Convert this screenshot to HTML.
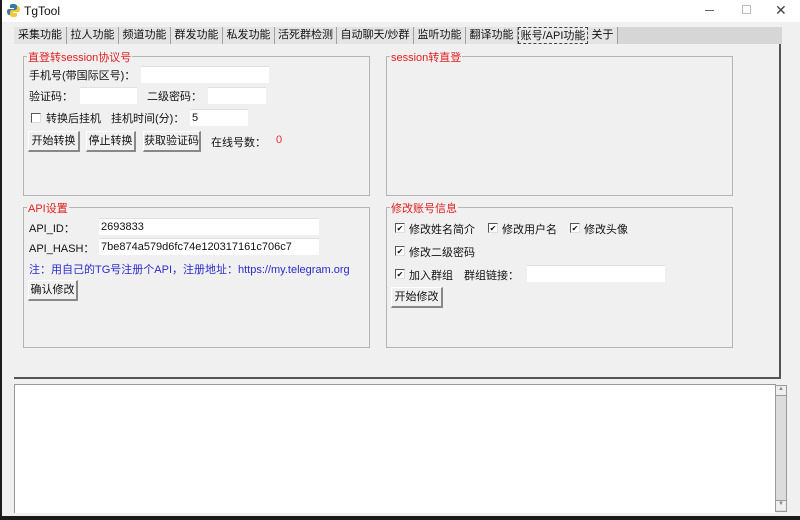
<!DOCTYPE html>
<html><head><meta charset="utf-8"><style>
*{margin:0;padding:0;box-sizing:border-box}
body{width:800px;height:520px;overflow:hidden;background:#1b1b1b;font-family:"Liberation Sans","Noto Sans CJK SC",sans-serif;font-size:11px;color:#111;position:relative}
.win{position:absolute;left:2px;top:0;width:798px;height:516px;background:#f0f0f0}
.title{position:absolute;left:0;top:0;width:798px;height:22px;background:#fff}
.a{position:absolute;white-space:nowrap}
.tabrow{position:absolute;left:12px;top:27px;width:768px;height:17px;background:#d6d6d6}
.tab{position:absolute;top:0;height:17px;line-height:16px;background:#e4e4e4;border-right:1px solid #a0a0a0;text-align:center;font-size:11px;white-space:nowrap;overflow:hidden}
.panel{position:absolute;left:12px;top:44px;width:767px;height:335px;background:#f0f0f0;border-right:2px solid #555;border-bottom:2px solid #555}
.grp{position:absolute;border:1px solid #b4b4b4}
.lg{position:absolute;top:-8px;left:3px;background:#f0f0f0;color:#e02020;padding:0 1px;font-size:11px;white-space:nowrap}
.in{position:absolute;background:#fff;height:17px;border-top:1px solid #e0e0e0;padding-left:2px;line-height:16px;font-size:11px;white-space:nowrap}
.btn{position:absolute;height:21px;background:#f0f0f0;border:1px solid #fff;border-right:2px solid #888;border-bottom:2px solid #888;line-height:18px;text-align:center;font-size:11px;white-space:nowrap;overflow:hidden}
.cb{position:absolute;width:10px;height:10px;border-left:1px solid #555;border-top:1px solid #555;border-right:1px solid #ddd;border-bottom:1px solid #ddd;background:#fff;font-size:8px;line-height:9px;text-align:center}
</style></head><body>
<div class="win">
<div class="title">
<svg class="a" style="left:5px;top:4px" width="13" height="13" viewBox="0 0 13 13"><path d="M6 0C3 0 3 1 3 2v2h4v1H2C0 5 0 7 0 8s1 3 2 3h1V9c0-1 1-2 2-2h3c1 0 2-1 2-2V2C10 1 9 0 6 0z" fill="#3b77a8"/><path d="M7 13c3 0 3-1 3-2V9H6V8h5c2 0 2-2 2-3s-1-3-2-3h-1v2c0 1-1 2-2 2H5C4 6 3 7 3 8v3c0 1 1 2 4 2z" fill="#f2c83a"/></svg>
<div class="a" style="left:22px;top:4px;font-size:12px">TgTool</div>
<div class="a" style="left:703px;top:10px;width:9px;height:1px;background:#666"></div>
<div class="a" style="left:740px;top:5px;width:9px;height:9px;border:1px solid #bbb"></div>
<div class="a" style="left:773px;top:2px;font-size:14px;color:#444">✕</div>
</div>
<div class="tabrow">
<div class="tab" style="left:0;width:53px">采集功能</div>
<div class="tab" style="left:53px;width:52px">拉人功能</div>
<div class="tab" style="left:105px;width:52px">频道功能</div>
<div class="tab" style="left:157px;width:52px">群发功能</div>
<div class="tab" style="left:209px;width:52px">私发功能</div>
<div class="tab" style="left:261px;width:62px">活死群检测</div>
<div class="tab" style="left:323px;width:77px">自动聊天/炒群</div>
<div class="tab" style="left:400px;width:52px">监听功能</div>
<div class="tab" style="left:452px;width:52px">翻译功能</div>
<div class="tab" style="left:504px;width:70px;background:#eaeaea;border:1px dashed #444">账号/API功能</div>
<div class="tab" style="left:574px;width:30px">关于</div>
</div>
<div class="panel">
<div class="grp" style="left:9px;top:12px;width:347px;height:140px">
<div class="lg">直登转session协议号</div>
<div class="a" style="left:5px;top:10px">手机号(带国际区号)：</div>
<div class="in" style="left:117px;top:9px;width:128px"></div>
<div class="a" style="left:5px;top:31px">验证码：</div>
<div class="in" style="left:56px;top:30px;width:57px"></div>
<div class="a" style="left:123px;top:31px">二级密码：</div>
<div class="in" style="left:184px;top:30px;width:58px"></div>
<div class="cb" style="left:7px;top:56px"></div>
<div class="a" style="left:22px;top:53px">转换后挂机</div>
<div class="a" style="left:87px;top:53px">挂机时间(分)：</div>
<div class="in" style="left:166px;top:52px;width:58px">5</div>
<div class="btn" style="left:4px;top:74px;width:52px">开始转换</div>
<div class="btn" style="left:62px;top:74px;width:50px">停止转换</div>
<div class="btn" style="left:119px;top:74px;width:58px">获取验证码</div>
<div class="a" style="left:187px;top:77px">在线号数：</div>
<div class="a" style="left:252px;top:77px;color:#e03030">0</div>
</div>
<div class="grp" style="left:372px;top:12px;width:347px;height:140px">
<div class="lg">session转直登</div>
</div>
<div class="grp" style="left:9px;top:163px;width:347px;height:141px">
<div class="lg">API设置</div>
<div class="a" style="left:5px;top:12px">API_ID：</div>
<div class="in" style="left:75px;top:10px;width:220px">2693833</div>
<div class="a" style="left:5px;top:32px">API_HASH：</div>
<div class="in" style="left:75px;top:30px;width:220px">7be874a579d6fc74e120317161c706c7</div>
<div class="a" style="left:5px;top:53px;color:#2b2bcc;font-size:11px">注：用自己的TG号注册个API，注册地址：https://my.telegram.org</div>
<div class="btn" style="left:4px;top:72px;width:50px">确认修改</div>
</div>
<div class="grp" style="left:372px;top:163px;width:347px;height:141px">
<div class="lg">修改账号信息</div>
<div class="cb" style="left:8px;top:15px">✔</div><div class="a" style="left:22px;top:13px">修改姓名简介</div>
<div class="cb" style="left:101px;top:15px">✔</div><div class="a" style="left:115px;top:13px">修改用户名</div>
<div class="cb" style="left:183px;top:15px">✔</div><div class="a" style="left:197px;top:13px">修改头像</div>
<div class="cb" style="left:8px;top:38px">✔</div><div class="a" style="left:22px;top:36px">修改二级密码</div>
<div class="cb" style="left:8px;top:61px">✔</div><div class="a" style="left:22px;top:59px">加入群组</div>
<div class="a" style="left:77px;top:59px">群组链接：</div>
<div class="in" style="left:140px;top:57px;width:138px"></div>
<div class="btn" style="left:4px;top:79px;width:52px">开始修改</div>
</div>
</div>
<div class="a" style="left:12px;top:384px;width:762px;height:129px;background:#fff;border-left:1px solid #999;border-top:1px solid #999"></div>
<div class="a" style="left:773px;top:385px;width:12px;height:127px;background:#dcdcdc;border:1px solid #999"></div>
<div class="a" style="left:774px;top:386px;width:10px;height:10px;background:#eee;border-bottom:1px solid #999;font-size:6px;text-align:center;color:#888">▲</div>
<div class="a" style="left:774px;top:500px;width:10px;height:10px;background:#eee;border-top:1px solid #999;font-size:6px;text-align:center;color:#888">▼</div>
</div>
</body></html>
